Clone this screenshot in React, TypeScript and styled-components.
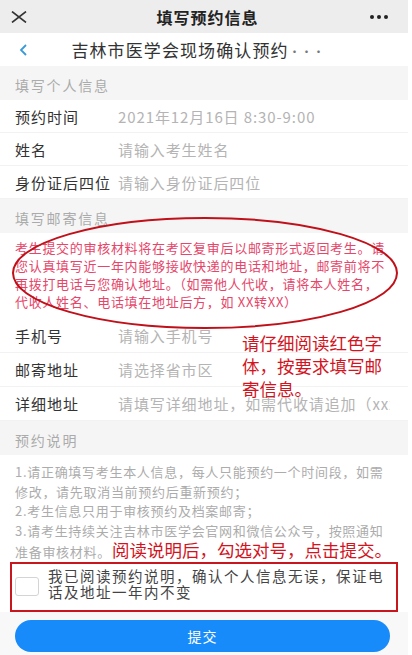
import React from 'react'
import styled, { createGlobalStyle } from 'styled-components'

const GlobalStyle = createGlobalStyle`
    body {
        margin: 0;
        background: #ffffff;
        font-family: "Noto Sans CJK SC", "Noto Sans", sans-serif;
    }
`

const Page = styled.div`
    position: relative;
    width: 408px;
    background: #ffffff;
`

const TopBar = styled.div`
    height: 33px;
    background: #ededed;
    display: flex;
    align-items: center;
    justify-content: space-between;
    padding: 0 20px 0 11px;
`

const TopTitle = styled.div`
    font-size: 16px;
    font-weight: 700;
    letter-spacing: 1px;
    color: #222;
    margin-left: 18px;
`

const Dots = styled.div`
    display: flex;
    gap: 3px;
    span {
        width: 4px;
        height: 4px;
        border-radius: 50%;
        background: #222;
    }
`

const NavBar = styled.div`
    height: 33px;
    display: flex;
    align-items: center;
    padding-left: 19px;
`

const NavTitle = styled.div`
    flex: 1;
    text-align: center;
    font-size: 17px;
    letter-spacing: 1.1px;
    color: #333;
    margin-right: 40px;
    span {
        font-size: 12px;
        color: #777;
        letter-spacing: 0;
    }
`

const SectionHeader = styled.div`
    height: 34px;
    box-sizing: border-box;
    padding: 10px 15px 0;
    background: #f5f5f5;
    font-size: 14px;
    line-height: 18px;
    letter-spacing: 1.8px;
    color: #ababab;
`

const Row = styled.div<{ $h?: number }>`
    height: ${p => p.$h ?? 33}px;
    box-sizing: border-box;
    display: flex;
    align-items: center;
    padding: 0 18px 0 15px;
    border-bottom: 1px solid #f2f2f2;
    overflow: hidden;
`

const Label = styled.div`
    width: 103px;
    flex-shrink: 0;
    font-size: 15px;
    letter-spacing: 1px;
    color: #333;
`

const Value = styled.div`
    font-size: 15px;
    letter-spacing: 0.9px;
    color: #b4b4b4;
    white-space: nowrap;
    overflow: hidden;
`

const Paragraph = styled.div<{ $color: string }>`
    padding: 6px 0 8px 15px;
    font-size: 13px;
    line-height: 18px;
    letter-spacing: 0.7px;
    color: ${p => p.$color};
    white-space: nowrap;
    span.line {
        display: block;
    }
`

const Notes = styled(Paragraph)`
    padding-top: 7px;
    padding-bottom: 0;
    line-height: 19.5px;
`

const Remark = styled.span`
    font-size: 17.5px;
    letter-spacing: 0;
    color: #d2141e;
    margin-left: 1px;
`

const Annotation = styled.div`
    position: absolute;
    left: 242px;
    top: 331px;
    width: 145px;
    font-size: 17.5px;
    line-height: 23px;
    color: #d2141e;
`

const Ellipse = styled.svg`
    position: absolute;
    left: 10px;
    top: 215px;
    pointer-events: none;
`

const AgreeBox = styled.div`
    height: 50px;
    box-sizing: border-box;
    margin: 0 10px;
    border: 2px solid #c8161e;
    display: flex;
    align-items: center;
    gap: 9px;
    padding: 0 0 5px 3px;
`

const Check = styled.div`
    width: 22px;
    height: 17px;
    flex-shrink: 0;
    border: 1px solid #d4d4d4;
    border-radius: 3px;
    background: #fff;
    margin-top: 5px;
`

const AgreeText = styled.div`
    font-size: 14.5px;
    line-height: 16px;
    letter-spacing: 1.5px;
    color: #444;
`

const Footer = styled.div`
    background: #f8f8f8;
    padding: 8px 18px 8px 15px;
`

const SubmitButton = styled.button`
    width: 100%;
    height: 32px;
    border: none;
    border-radius: 16px;
    background: #188bfb;
    color: #fff;
    font-family: inherit;
    font-size: 14px;
    letter-spacing: 1px;
`

const mailLines = [
    '考生提交的审核材料将在考区复审后以邮寄形式返回考生。请',
    '您认真填写近一年内能够接收快递的电话和地址，邮寄前将不',
    '再拨打电话与您确认地址。（如需他人代收，请将本人姓名，',
    '代收人姓名、电话填在地址后方，如 XX转XX）',
]

const noteLines = [
    '1.请正确填写考生本人信息，每人只能预约一个时间段，如需',
    '修改，请先取消当前预约后重新预约；',
    '2.考生信息只用于审核预约及档案邮寄；',
    '3.请考生持续关注吉林市医学会官网和微信公众号，按照通知',
]

export default function App() {
    return (
        <Page>
            <GlobalStyle />
            <TopBar>
                <svg width="16" height="12" viewBox="0 0 16 12">
                    <path d="M1 0.5 L15 11.5 M15 0.5 L1 11.5" stroke="#333" strokeWidth="1.6" />
                </svg>
                <TopTitle>填写预约信息</TopTitle>
                <Dots><span /><span /><span /></Dots>
            </TopBar>
            <NavBar>
                <svg width="9" height="12" viewBox="0 0 9 12">
                    <path d="M7 1 L2 6 L7 11" fill="none" stroke="#3a9ad9" strokeWidth="1.8" />
                </svg>
                <NavTitle>吉林市医学会现场确认预约<span>···</span></NavTitle>
            </NavBar>

            <SectionHeader>填写个人信息</SectionHeader>
            <Row>
                <Label>预约时间</Label>
                <Value>2021年12月16日 8:30-9:00</Value>
            </Row>
            <Row>
                <Label>姓名</Label>
                <Value>请输入考生姓名</Value>
            </Row>
            <Row>
                <Label>身份证后四位</Label>
                <Value>请输入身份证后四位</Value>
            </Row>

            <SectionHeader>填写邮寄信息</SectionHeader>
            <Paragraph $color="#e6466a">
                {mailLines.map(l => <span className="line" key={l}>{l}</span>)}
            </Paragraph>
            <Row $h={34}>
                <Label>手机号</Label>
                <Value>请输入手机号</Value>
            </Row>
            <Row $h={34}>
                <Label>邮寄地址</Label>
                <Value>请选择省市区</Value>
            </Row>
            <Row $h={34}>
                <Label>详细地址</Label>
                <Value>请填写详细地址，如需代收请追加（xxx转xxx）</Value>
            </Row>

            <SectionHeader>预约说明</SectionHeader>
            <Notes $color="#acacac">
                {noteLines.map(l => <span className="line" key={l}>{l}</span>)}
                <span className="line">准备审核材料。<Remark>阅读说明后，勾选对号，点击提交。</Remark></span>
            </Notes>

            <AgreeBox>
                <Check />
                <AgreeText>我已阅读预约说明，确认个人信息无误，保证电话及地址一年内不变</AgreeText>
            </AgreeBox>
            <Footer>
                <SubmitButton>提交</SubmitButton>
            </Footer>

            <Ellipse width="392" height="118" viewBox="0 0 392 118">
                <ellipse cx="195" cy="58" rx="192" ry="55" fill="none" stroke="#c0101a" strokeWidth="2" />
            </Ellipse>
            <Annotation>请仔细阅读红色字体，按要求填写邮寄信息。</Annotation>
        </Page>
    )
}
